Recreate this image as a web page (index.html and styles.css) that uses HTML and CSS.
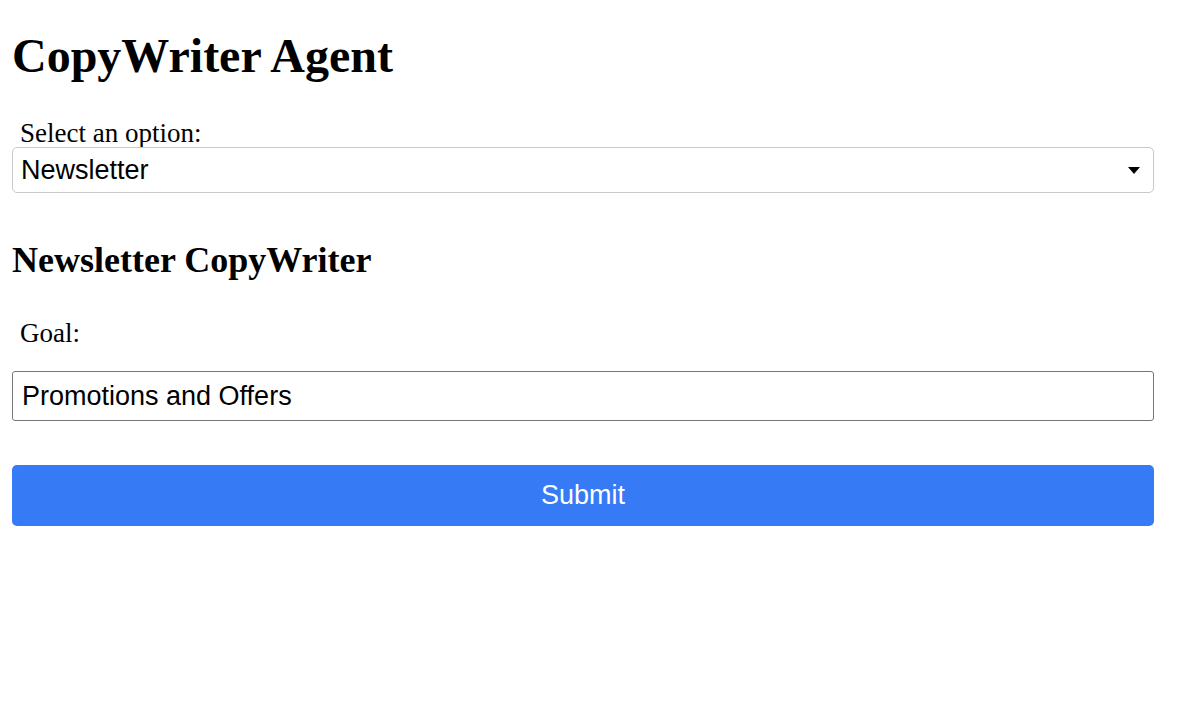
FILE: index.html
```html
<!DOCTYPE html>
<html lang="en">
<head>
<meta charset="utf-8">
<title>CopyWriter Agent</title>
<link rel="stylesheet" href="styles.css">
</head>
<body>
<main class="page">
  <h1 class="title">CopyWriter Agent</h1>
  <label class="field-label" for="option">Select an option:</label>
  <div class="select-wrap">
    <select id="option" class="select">
      <option>Newsletter</option>
      <option>Blog Post</option>
      <option>Social Media</option>
    </select>
    <svg class="select-arrow" width="12" height="7" viewBox="0 0 12 7" aria-hidden="true"><path d="M0 0H12L6 7Z" fill="#000"/></svg>
  </div>
  <h2 class="subtitle">Newsletter CopyWriter</h2>
  <label class="field-label goal" for="goal">Goal:</label>
  <input id="goal" class="text-input" type="text" value="Promotions and Offers">
  <button class="submit" type="button">Submit</button>
</main>
</body>
</html>
```

FILE: styles.css
```css
html, body {
  margin: 0;
  padding: 0;
  background: #ffffff;
}

.page {
  width: 1142px;
  padding: 28px 0 0 12px;
  display: flex;
  flex-direction: column;
  font-family: "Liberation Serif", "Times New Roman", serif;
  color: #000;
}

.title {
  margin: 0;
  font-size: 48px;
  line-height: 56px;
  font-weight: bold;
}

.field-label {
  display: block;
  margin: 36px 0 0 0;
  padding-left: 8px;
  font-size: 27px;
  line-height: 27px;
}

.select-wrap {
  position: relative;
  height: 46px;
}

.select {
  appearance: none;
  -webkit-appearance: none;
  width: 100%;
  height: 46px;
  box-sizing: border-box;
  margin: 0;
  padding: 0 40px 0 8px;
  border: 1px solid #c9c9c9;
  border-radius: 5px;
  background: #fff;
  font-family: "Liberation Sans", Arial, sans-serif;
  font-size: 27px;
  color: #000;
}

.select-arrow {
  position: absolute;
  right: 14px;
  top: 20px;
}

.subtitle {
  margin: 46px 0 0 0;
  font-size: 36px;
  line-height: 42px;
  font-weight: bold;
}

.field-label.goal {
  margin-top: 39px;
}

.text-input {
  margin: 24px 0 0 0;
  height: 50px;
  box-sizing: border-box;
  padding: 0 9px;
  border: 1px solid #767676;
  border-radius: 3px;
  font-family: "Liberation Sans", Arial, sans-serif;
  font-size: 27px;
  color: #000;
  background: #fff;
}

.submit {
  margin: 44px 0 0 0;
  height: 61px;
  border: none;
  border-radius: 5px;
  background: #367af6;
  color: #fff;
  font-family: "Liberation Sans", Arial, sans-serif;
  font-size: 27px;
  cursor: pointer;
}
```
